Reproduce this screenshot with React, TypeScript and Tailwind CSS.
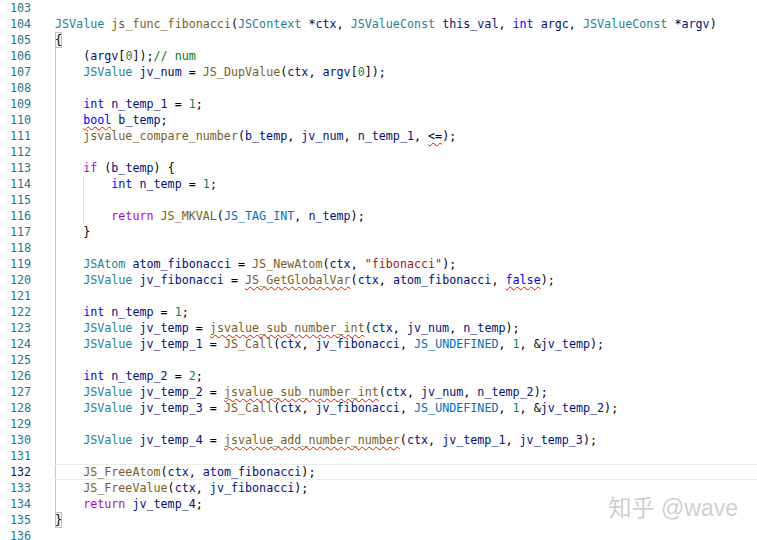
import React from "react"

type Line = { n: number; indent: number; code: string }

const LINES: Line[] = [
  { n: 103, indent: 0, code: "" },
  { n: 104, indent: 0, code: "JSValue js_func_fibonacci(JSContext *ctx, JSValueConst this_val, int argc, JSValueConst *argv)" },
  { n: 105, indent: 0, code: "{" },
  { n: 106, indent: 1, code: "(argv[0]);// num" },
  { n: 107, indent: 1, code: "JSValue jv_num = JS_DupValue(ctx, argv[0]);" },
  { n: 108, indent: 1, code: "" },
  { n: 109, indent: 1, code: "int n_temp_1 = 1;" },
  { n: 110, indent: 1, code: "bool b_temp;" },
  { n: 111, indent: 1, code: "jsvalue_compare_number(b_temp, jv_num, n_temp_1, <=);" },
  { n: 112, indent: 1, code: "" },
  { n: 113, indent: 1, code: "if (b_temp) {" },
  { n: 114, indent: 2, code: "int n_temp = 1;" },
  { n: 115, indent: 2, code: "" },
  { n: 116, indent: 2, code: "return JS_MKVAL(JS_TAG_INT, n_temp);" },
  { n: 117, indent: 1, code: "}" },
  { n: 118, indent: 1, code: "" },
  { n: 119, indent: 1, code: 'JSAtom atom_fibonacci = JS_NewAtom(ctx, "fibonacci");' },
  { n: 120, indent: 1, code: "JSValue jv_fibonacci = JS_GetGlobalVar(ctx, atom_fibonacci, false);" },
  { n: 121, indent: 1, code: "" },
  { n: 122, indent: 1, code: "int n_temp = 1;" },
  { n: 123, indent: 1, code: "JSValue jv_temp = jsvalue_sub_number_int(ctx, jv_num, n_temp);" },
  { n: 124, indent: 1, code: "JSValue jv_temp_1 = JS_Call(ctx, jv_fibonacci, JS_UNDEFINED, 1, &jv_temp);" },
  { n: 125, indent: 1, code: "" },
  { n: 126, indent: 1, code: "int n_temp_2 = 2;" },
  { n: 127, indent: 1, code: "JSValue jv_temp_2 = jsvalue_sub_number_int(ctx, jv_num, n_temp_2);" },
  { n: 128, indent: 1, code: "JSValue jv_temp_3 = JS_Call(ctx, jv_fibonacci, JS_UNDEFINED, 1, &jv_temp_2);" },
  { n: 129, indent: 1, code: "" },
  { n: 130, indent: 1, code: "JSValue jv_temp_4 = jsvalue_add_number_number(ctx, jv_temp_1, jv_temp_3);" },
  { n: 131, indent: 1, code: "" },
  { n: 132, indent: 1, code: "JS_FreeAtom(ctx, atom_fibonacci);" },
  { n: 133, indent: 1, code: "JS_FreeValue(ctx, jv_fibonacci);" },
  { n: 134, indent: 1, code: "return jv_temp_4;" },
  { n: 135, indent: 0, code: "}" },
  { n: 136, indent: 0, code: "" },
]

const CURRENT = 132
const BRACKETS = [105, 135]

// red squiggles, by line
const ERRORS: Record<number, string[]> = {
  110: ["bool"],
  111: ["<="],
  120: ["JS_GetGlobalVar", "false"],
  123: ["jsvalue_sub_number_int"],
  127: ["jsvalue_sub_number_int"],
  130: ["jsvalue_add_number_number"],
}

const TYPES = ["JSValue", "JSContext", "JSValueConst", "JSAtom"]
const KEYWORDS = ["int", "bool", "false"]
const CONTROL = ["if", "return"]
const CONSTS = ["JS_UNDEFINED", "JS_TAG_INT"]

function colorOf(tok: string, rest: string) {
  if (tok.startsWith("//")) return "text-[#008000]"
  if (tok.startsWith('"')) return "text-[#a31515]"
  if (/^\d+$/.test(tok)) return "text-[#098658]"
  if (/^[A-Za-z_]\w*$/.test(tok)) {
    if (TYPES.includes(tok)) return "text-[#267f99]"
    if (KEYWORDS.includes(tok)) return "text-[#0000ff]"
    if (CONTROL.includes(tok)) return "text-[#af00db]"
    if (CONSTS.includes(tok)) return "text-[#0070c1]"
    if (/^\s*\(/.test(rest)) return "text-[#795e26]"
    return "text-[#001080]"
  }
  return "text-[#000000]"
}

function Code({ line }: { line: Line }) {
  const errs = ERRORS[line.n] || []
  const re = /(\/\/.*$)|("[^"]*")|([A-Za-z_]\w*)|(\d+)|(<=)|(\s+)|(.)/g
  const out: React.ReactNode[] = []
  let m: RegExpExecArray | null
  let i = 0
  while ((m = re.exec(line.code))) {
    const tok = m[0]
    const rest = line.code.slice(m.index + tok.length)
    const squiggle = errs.includes(tok)
    out.push(
      <span
        key={i++}
        className={`${colorOf(tok, rest)} ${squiggle ? "underline decoration-wavy decoration-[#e51400] decoration-1 underline-offset-2" : ""}`}
      >
        {tok}
      </span>
    )
  }
  return <span className="whitespace-pre">{out}</span>
}

export default function App() {
  return (
    <div className="relative h-[540px] w-[757px] overflow-hidden bg-white font-['DejaVu_Sans_Mono','Liberation_Mono',monospace] text-[11.7px]">
      {LINES.map((line) => {
        const current = line.n === CURRENT
        return (
          <div key={line.n} className="flex h-4 leading-4">
            <span
              className={`w-[31px] shrink-0 text-right ${current ? "text-[#0b216f]" : "text-[#237893]"}`}
            >
              {line.n}
            </span>
            <div
              className={`ml-[24px] flex flex-1 ${current ? "border-y border-[#ececec] leading-[14px]" : ""}`}
            >
              {Array.from({ length: line.indent }).map((_, g) => (
                <span
                  key={g}
                  className={`w-[4ch] shrink-0 border-l ${g === 0 ? "border-[#c6c6c6]" : "border-[#e3e3e3]"}`}
                />
              ))}
              {BRACKETS.includes(line.n) ? (
                <span className="inline-block w-[1ch] bg-[#f3f3f3] text-[#000000] shadow-[inset_0_0_0_1px_#bdbdbd]">
                  {line.code}
                </span>
              ) : (
                <Code line={line} />
              )}
            </div>
          </div>
        )
      })}

      {/* watermark */}
      <div className="absolute right-[19px] top-[494px] font-['Liberation_Sans','Noto_Sans_CJK_SC',sans-serif] text-[23px] leading-7 text-[#cfcfcf]">
        知乎 @wave
      </div>
    </div>
  )
}
